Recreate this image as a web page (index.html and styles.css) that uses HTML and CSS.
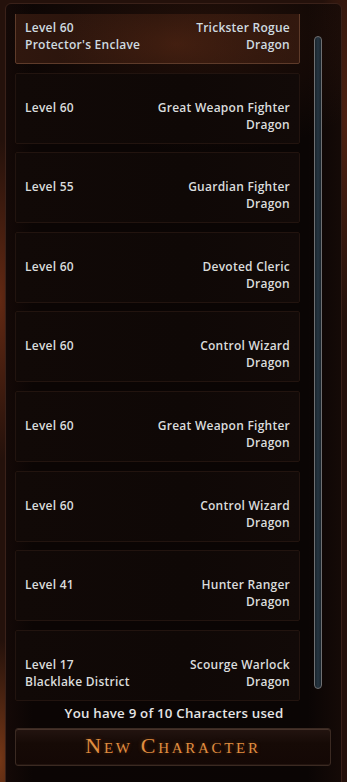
FILE: index.html
```
<!DOCTYPE html>
<html>
<head>
<meta charset="utf-8">
<link rel="stylesheet" href="styles.css">
</head>
<body>
<div class="panel">
  <div class="main">
    <div class="list">
      <div class="cards">
        <div class="card selected"><div class="row"><span>Level 60</span><span>Trickster Rogue</span></div><div class="row"><span>Protector's Enclave</span><span>Dragon</span></div></div>
        <div class="card"><div class="row"><span>Level 60</span><span>Great Weapon Fighter</span></div><div class="row"><span></span><span>Dragon</span></div></div>
        <div class="card"><div class="row"><span>Level 55</span><span>Guardian Fighter</span></div><div class="row"><span></span><span>Dragon</span></div></div>
        <div class="card"><div class="row"><span>Level 60</span><span>Devoted Cleric</span></div><div class="row"><span></span><span>Dragon</span></div></div>
        <div class="card"><div class="row"><span>Level 60</span><span>Control Wizard</span></div><div class="row"><span></span><span>Dragon</span></div></div>
        <div class="card"><div class="row"><span>Level 60</span><span>Great Weapon Fighter</span></div><div class="row"><span></span><span>Dragon</span></div></div>
        <div class="card"><div class="row"><span>Level 60</span><span>Control Wizard</span></div><div class="row"><span></span><span>Dragon</span></div></div>
        <div class="card"><div class="row"><span>Level 41</span><span>Hunter Ranger</span></div><div class="row"><span></span><span>Dragon</span></div></div>
        <div class="card"><div class="row"><span>Level 17</span><span>Scourge Warlock</span></div><div class="row"><span>Blacklake District</span><span>Dragon</span></div></div>
      </div>
    </div>
    <div class="scroll"><div class="thumb"></div></div>
  </div>
  <div class="count">You have 9 of 10 Characters used</div>
  <div class="btn">New Character</div>
</div>
</body>
</html>
```
FILE: styles.css
```
html, body { margin: 0; padding: 0; }
body {
  width: 347px;
  height: 782px;
  overflow: hidden;
  background:
    radial-gradient(ellipse 30px 160px at 0px 300px, rgba(150,60,25,0.55), transparent),
    radial-gradient(ellipse 30px 120px at 0px 760px, rgba(170,80,30,0.6), transparent),
    radial-gradient(ellipse 30px 200px at 347px 120px, rgba(120,50,25,0.5), transparent),
    #24110b;
  font-family: "Open Sans", "Noto Sans", sans-serif;
  padding: 3px 5px 0 5px;
  box-sizing: border-box;
}
.panel {
  height: 800px;
  border: 1px solid #3a2119;
  border-radius: 6px 6px 0 0;
  background:
    radial-gradient(ellipse 200px 120px at 200px 30px, rgba(90,40,20,0.3), transparent),
    linear-gradient(90deg, #140907 0%, #0b0504 8%, #0a0504 90%, #150a07 100%);
  box-sizing: border-box;
  padding: 10px 9px 0 9px;
  display: flex;
  flex-direction: column;
}
.main {
  display: flex;
  height: 688px;
}
.list {
  width: 285px;
  height: 688px;
  overflow: hidden;
}
.cards {
  margin-top: -21px;
  display: flex;
  flex-direction: column;
  gap: 8.6px;
}
.card {
  height: 71px;
  box-sizing: border-box;
  border: 1px solid #22140f;
  border-radius: 2px;
  background: linear-gradient(90deg, #110907, #0f0806 60%, #120a08);
  padding: 0 9px 10px 9px;
  display: flex;
  flex-direction: column;
  justify-content: flex-end;
}
.card.selected {
  border-color: #5e3b2a;
  background:
    radial-gradient(ellipse 120px 60px at 160px 50px, rgba(100,45,22,0.45), transparent),
    linear-gradient(90deg, #30170e, #25120b 50%, #32180e);
}
.row {
  display: flex;
  justify-content: space-between;
  font-size: 12px;
  font-weight: 600;
  line-height: 17px;
  color: #dadcdc;
  letter-spacing: 0.25px;
}
.selected .row { color: #cfdbe0; }
.scroll {
  flex: 1;
  display: flex;
  justify-content: center;
  padding-top: 22px;
  padding-left: 4px;
}
.thumb {
  width: 6px;
  height: 651px;
  border: 1.5px solid #6f7072;
  border-radius: 5px;
  background: linear-gradient(90deg, #19242c, #263541, #19242c);
}
.count {
  margin-top: 2px;
  text-align: center;
  font-size: 13.3px;
  font-weight: 600;
  color: #e4e4e4;
  line-height: 18px;
  letter-spacing: 0.2px;
  padding-left: 1px;
}
.btn {
  margin-top: 6px;
  margin-right: 1px;
  height: 38px;
  box-sizing: border-box;
  border: 1px solid #3b2a22;
  border-radius: 3px;
  background: linear-gradient(180deg, #231410 0%, #160a06 40%, #140805 100%);
  box-shadow: inset 0 1px 0 #46322a, inset 0 -1px 0 #22140f;
  display: flex;
  align-items: center;
  justify-content: center;
  font-family: "Liberation Serif", "DejaVu Serif", serif;
  font-variant: small-caps;
  font-size: 22px;
  letter-spacing: 2.7px;
  color: #e08e40;
  text-shadow: 0 0 4px rgba(200,100,30,0.35);
  padding-bottom: 2px;
}
```
